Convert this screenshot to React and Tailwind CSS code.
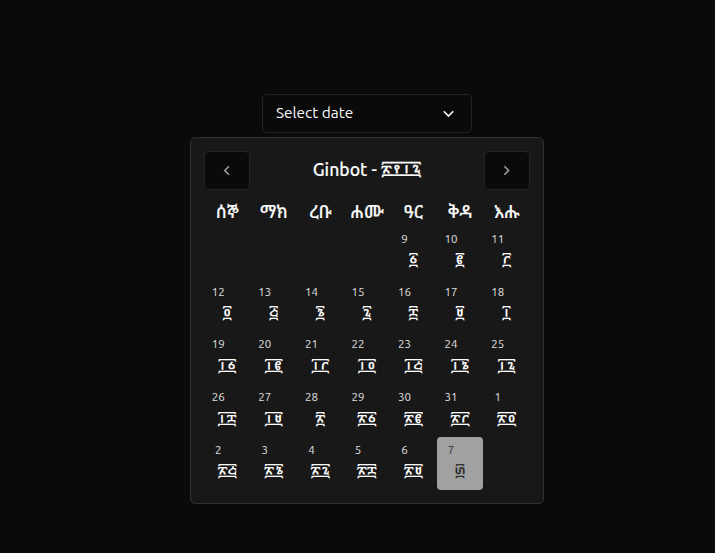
import React from "react";

const weekdays = ["ሰኞ", "ማክ", "ረቡ", "ሐሙ", "ዓር", "ቅዳ", "እሑ"];
const days = [
  null, null, null, null,
  [9, "፩"], [10, "፪"], [11, "፫"],
  [12, "፬"], [13, "፭"], [14, "፮"], [15, "፯"], [16, "፰"], [17, "፱"], [18, "፲"],
  [19, "፲፩"], [20, "፲፪"], [21, "፲፫"], [22, "፲፬"], [23, "፲፭"], [24, "፲፮"], [25, "፲፯"],
  [26, "፲፰"], [27, "፲፱"], [28, "፳"], [29, "፳፩"], [30, "፳፪"], [31, "፳፫"], [1, "፳፬"],
  [2, "፳፭"], [3, "፳፮"], [4, "፳፯"], [5, "፳፰"], [6, "፳፱"], [7, "፴"], null,
];

function Chevron({ d, className }) {
  return (
    <svg viewBox="0 0 15 15" className={className} fill="none" stroke="currentColor">
      <path d={d} />
    </svg>
  );
}

function NavButton({ d, label }) {
  return (
    <button aria-label={label} className="flex h-[39px] w-[46px] items-center justify-center rounded-[5px] border border-[#242424] bg-[#0a0a0a] text-[#a1a1a1]">
      <Chevron d={d} className="size-[15px] stroke-[1.5]" />
    </button>
  );
}

function Day({ day }) {
  if (!day) return <div className="h-[52.75px]" />;
  const selected = day[1] === "፴";
  return (
    <div className={`flex h-[52.75px] flex-col rounded-[4px] ${selected ? "bg-[#a1a1a1] text-[#303030]" : "text-[#fafafa]"}`}>
      <span className={`mt-[4.8px] w-[28.5px] text-center text-[11.5px] leading-4 ${selected ? "" : "text-[#e0e0e0]"}`}>{day[0]}</span>
      <span className="mt-[1.7px] -ml-[0.25px] text-center text-[16.5px] leading-6 font-medium whitespace-nowrap">{day[1]}</span>
    </div>
  );
}

export default function App() {
  return (
    <main className="flex h-[553px] w-[715px] flex-col overflow-hidden bg-[#0a0a0a] pt-[94px] font-['Ubuntu','Noto_Sans','Noto_Sans_Ethiopic',sans-serif] text-[#fafafa]">
      <button className="ml-[262px] flex h-[39px] w-[210px] items-center justify-between rounded-[5px] border border-[#242424] pr-[15px] pl-[13px] text-[15.4px]">
        <span className="-mt-px">Select date</span>
        <Chevron d="M2.8 5.3 7.5 10 12.2 5.3" className="size-[15px] stroke-[1.6]" />
      </button>
      <section className="mt-[4px] ml-[190px] h-[367px] w-[354px] rounded-[5px] border border-[#303030] bg-[#181818] p-[13px]">
        <header className="flex h-[39px] items-center justify-between">
          <NavButton label="Previous month" d="M9 3.2 4.8 7.5 9 11.8" />
          <h2 className="text-[17.6px] font-medium whitespace-nowrap [-webkit-text-stroke:0.15px]">Ginbot - ፳፻፲፯</h2>
          <NavButton label="Next month" d="M5.4 3.2 9.6 7.5 5.4 11.8" />
        </header>
        <div className="mt-[8px] grid h-[28px] grid-cols-7">
          {weekdays.map((w) => (
            <div key={w} className="text-center text-[17.6px] leading-7 font-medium whitespace-nowrap [-webkit-text-stroke:0.15px]">{w}</div>
          ))}
        </div>
        <div className="grid grid-cols-7">
          {days.map((d, i) => <Day key={i} day={d} />)}
        </div>
      </section>
    </main>
  );
}
